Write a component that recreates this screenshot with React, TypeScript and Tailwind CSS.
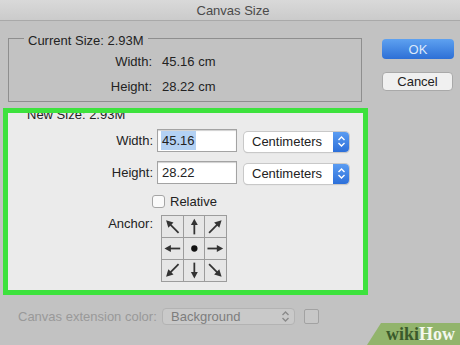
const arrows: (number | null)[] = [-45, 0, 45, -90, null, 90, -135, 180, 135]

function Arrow({ angle }: { angle: number | null }) {
  if (angle === null) {
    return (
      <svg width="21" height="21" viewBox="0 0 21 21">
        <circle cx="10.5" cy="10.5" r="3.2" fill="#111" />
      </svg>
    )
  }
  const diag = angle % 90 !== 0
  return (
    <svg width="21" height="21" viewBox="0 0 21 21">
      <g transform={`rotate(${angle} 10.5 10.5)`}>
        <line x1="10.5" y1={diag ? 19.5 : 18.5} x2="10.5" y2="7" stroke="#333" strokeWidth="1.8" />
        <polygon points={diag ? '10.5,1.5 6.8,8.5 14.2,8.5' : '10.5,2.5 7,9 14,9'} fill="#333" />
      </g>
    </svg>
  )
}

function Stepper({ color = '#fff' }: { color?: string }) {
  return (
    <svg width="9" height="13" viewBox="0 0 9 13">
      <path d="M1.5 5 L4.5 2 L7.5 5 M1.5 8 L4.5 11 L7.5 8" fill="none" stroke={color} strokeWidth="1.4" />
    </svg>
  )
}

function UnitSelect() {
  return (
    <div className="flex h-[20px] w-[105px] items-center rounded-[4px] bg-white shadow-[0_0_0_1px_#c8c8c8,0_1px_1px_#b8b8b8]">
      <span className="flex-1 pl-[8px]">Centimeters</span>
      <span className="flex h-full w-[16px] items-center justify-center rounded-r-[4px] bg-gradient-to-b from-[#5a9cf2] to-[#2c6fd9]">
        <Stepper />
      </span>
    </div>
  )
}

export default function App() {
  return (
    <div className="relative h-[345px] w-[460px] overflow-hidden bg-[#c2c2c2] font-['Liberation_Sans',Arial,sans-serif] text-[13px] leading-none text-[#222]">
      <div className="flex h-[21px] items-center justify-center border-b border-[#a9a9a9] bg-gradient-to-b from-[#d9d9d9] to-[#cbcbcb] pl-[6px] text-[#4a4a4a]">
        Canvas Size
      </div>

      <div className="flex">
        <div className="pl-[3px]">
          <div className="relative ml-[5px] mt-[17px] h-[64px] w-[354px] border border-[#8e8e8e] pt-[10px]">
            <span className="absolute left-[15px] top-[-6px] bg-[#c2c2c2] px-[4px] leading-[16px]">Current Size: 2.93M</span>
            <div className="flex h-[25px] items-center">
              <span className="w-[143px] text-right">Width:</span>
              <span className="pl-[10px]">45.16 cm</span>
            </div>
            <div className="flex h-[25px] items-center">
              <span className="w-[143px] text-right">Height:</span>
              <span className="pl-[10px]">28.22 cm</span>
            </div>
          </div>

          {/* green highlight drawn as outline so it paints over the group label */}
          <div className="mt-[6px] h-[187px] w-[365px] bg-[#ebebeb] p-[5px] outline-[5px] -outline-offset-[5px] outline-[#3de23d] outline-solid">
            <div className="-mt-[6px] pl-[19px] leading-[16px]">New Size: 2.93M</div>

            <div className="mt-[6px] flex h-[23px] items-center">
              <span className="w-[145px] text-right">Width:</span>
              <div className="ml-[4px] flex h-[23px] w-[80px] items-center border border-[#a3a3a3] bg-white pl-[3px] shadow-[inset_0_1px_1px_#d0d0d0]">
                <span className="bg-[#b3d1f3] px-[1px] py-[3px]">45.16</span>
              </div>
              <div className="ml-[7px] mt-[2px]">
                <UnitSelect />
              </div>
            </div>

            <div className="mt-[9px] flex h-[23px] items-center">
              <span className="w-[145px] text-right">Height:</span>
              <div className="ml-[4px] flex h-[23px] w-[80px] items-center border border-[#a3a3a3] bg-white pl-[4px] shadow-[inset_0_1px_1px_#d0d0d0]">
                28.22
              </div>
              <div className="ml-[7px] mt-[2px]">
                <UnitSelect />
              </div>
            </div>

            <div className="mt-[10px] flex h-[14px] items-center">
              <span className="ml-[144px] h-[13px] w-[13px] rounded-[3px] border border-[#a5a5a5] bg-[#fafafa]" />
              <span className="ml-[5px]">Relative</span>
            </div>

            <div className="mt-[7px] flex">
              <span className="w-[145px] pt-[1px] text-right leading-[16px]">Anchor:</span>
              <div className="ml-[8px] grid w-[66px] grid-cols-3 border-l border-t border-[#9c9c9c]">
                {arrows.map((a, i) => (
                  <div key={i} className="flex h-[22px] items-center justify-center border-b border-r border-[#9c9c9c] bg-[#e6e6e6]">
                    <Arrow angle={a} />
                  </div>
                ))}
              </div>
            </div>
          </div>

          <div className="mt-[12px] flex h-[18px] items-center text-[#999]">
            <span className="w-[159px] pl-[15px]">Canvas extension color:</span>
            <div className="flex h-[17px] w-[133px] items-center justify-between rounded-[4px] border border-[#b3b3b3] bg-[#c9c9c9] pl-[8px] pr-[4px] text-[#7d7d7d]">
              Background
              <Stepper color="#8a8a8a" />
            </div>
            <span className="ml-[9px] h-[15px] w-[15px] rounded-[2px] border border-[#a2a2a2] bg-[#c7c7c7]" />
          </div>
        </div>

        <div className="ml-[14px] flex flex-col">
          <button className="mt-[18px] h-[20px] w-[72px] rounded-[4px] bg-gradient-to-b from-[#5ea1f0] to-[#2d6fd6] text-[#dce9fb]">
            OK
          </button>
          <button className="mt-[13px] h-[19px] w-[71px] rounded-[4px] border border-[#a9a9a9] bg-[#f0f0f0] text-[#222]">
            Cancel
          </button>
        </div>
      </div>

      <div className="absolute bottom-0 right-0 flex h-[22px] w-[93px] items-center justify-end bg-[#92b46c] pr-[5px] font-['Liberation_Serif',serif] text-[18px] font-bold [clip-path:polygon(14px_0,100%_0,100%_100%,0_100%)]">
        <span className="text-[#3a5a2b]">wiki</span>
        <span className="text-[#f4f8ee]">How</span>
      </div>
    </div>
  )
}
